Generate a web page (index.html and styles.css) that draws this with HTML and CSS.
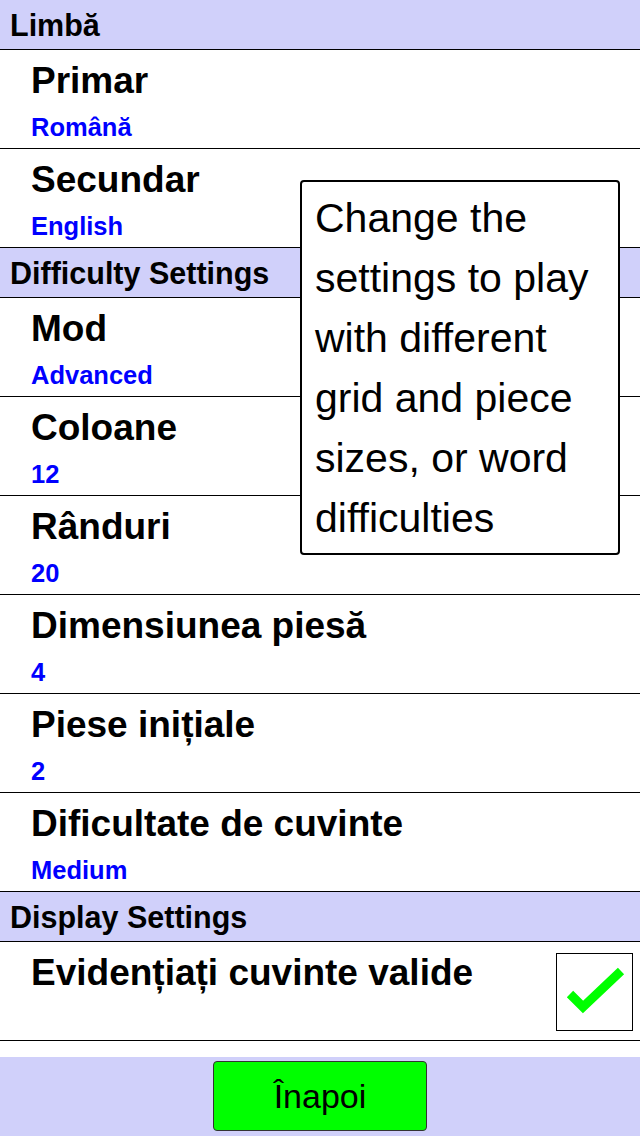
FILE: index.html
```html
<!DOCTYPE html>
<html lang="ro">
<head>
<meta charset="utf-8">
<title>Setări</title>
<link rel="stylesheet" href="styles.css">
</head>
<body>
<div class="screen">
  <div class="list">
    <div class="section">Limbă</div>
    <div class="row"><div class="row-text"><div class="title">Primar</div><div class="value">Română</div></div></div>
    <div class="row"><div class="row-text"><div class="title">Secundar</div><div class="value">English</div></div></div>
    <div class="section">Difficulty Settings</div>
    <div class="row"><div class="row-text"><div class="title">Mod</div><div class="value">Advanced</div></div></div>
    <div class="row"><div class="row-text"><div class="title">Coloane</div><div class="value">12</div></div></div>
    <div class="row"><div class="row-text"><div class="title">Rânduri</div><div class="value">20</div></div></div>
    <div class="row"><div class="row-text"><div class="title">Dimensiunea piesă</div><div class="value">4</div></div></div>
    <div class="row"><div class="row-text"><div class="title">Piese inițiale</div><div class="value">2</div></div></div>
    <div class="row"><div class="row-text"><div class="title">Dificultate de cuvinte</div><div class="value">Medium</div></div></div>
    <div class="section">Display Settings</div>
    <div class="row row-check">
      <div class="row-text"><div class="title">Evidențiați cuvinte valide</div></div>
      <div class="checkbox">
        <svg width="77" height="78" viewBox="0 0 77 78"><polyline points="14,41 27,54 65,18" fill="none" stroke="#00ff00" stroke-width="9" stroke-linejoin="miter"/></svg>
      </div>
    </div>

    <div class="tooltip">Change the settings to play with different grid and piece sizes, or word difficulties</div>
  </div>
  <div class="bar">
    <button class="back">Înapoi</button>
  </div>
</div>
</body>
</html>
```
FILE: styles.css
```css
html, body {
  margin: 0;
  padding: 0;
  height: 100%;
  overflow: hidden;
  background: #ffffff;
  font-family: "Liberation Sans", Arial, sans-serif;
  color: #000;
}

.screen {
  height: 1136px;
  display: flex;
  flex-direction: column;
}

.list {
  flex: 1;
  overflow: hidden;
  position: relative;
}

.section {
  height: 47px;
  padding-top: 2px;
  line-height: 47px;
  padding-left: 10px;
  background: #d0d0fa;
  border-bottom: 1px solid #000;
  font-size: 30.5px;
  font-weight: bold;
}

.row {
  height: 98px;
  box-sizing: content-box;
  border-bottom: 1px solid #000;
  display: flex;
  align-items: flex-start;
}

.row-text {
  flex: 1;
  padding-left: 31px;
  padding-top: 10px;
}

.title {
  font-size: 37px;
  line-height: 42px;
  font-weight: bold;
  white-space: nowrap;
}

.value {
  margin-top: 10px;
  font-size: 25.5px;
  line-height: 30px;
  font-weight: bold;
  color: #0000ff;
}

.row-check {
  align-items: center;
}

.row-check .row-text {
  align-self: flex-start;
}

.checkbox {
  width: 75px;
  height: 76px;
  border: 1px solid #000;
  margin-right: 7px;
  margin-top: 1px;
  position: relative;
}

.checkbox svg {
  position: absolute;
  left: -1px;
  top: -1px;
}

.tooltip {
  position: absolute;
  left: 300px;
  top: 180px;
  width: 291px;
  padding: 6px 12px 5px 13px;
  border: 2px solid #000;
  border-radius: 4px;
  background: #fff;
  font-size: 41px;
  line-height: 60px;
}

.bar {
  flex: none;
  height: 79px;
  background: #d0d0fa;
  display: flex;
  justify-content: center;
  align-items: flex-start;
}

.back {
  margin-top: 4px;
  width: 214px;
  height: 70px;
  padding: 0;
  background: #00ff00;
  border: 1px solid #333;
  border-radius: 4px;
  font-family: "Liberation Sans", Arial, sans-serif;
  font-size: 34px;
  line-height: 68px;
  color: #000;
}
```
